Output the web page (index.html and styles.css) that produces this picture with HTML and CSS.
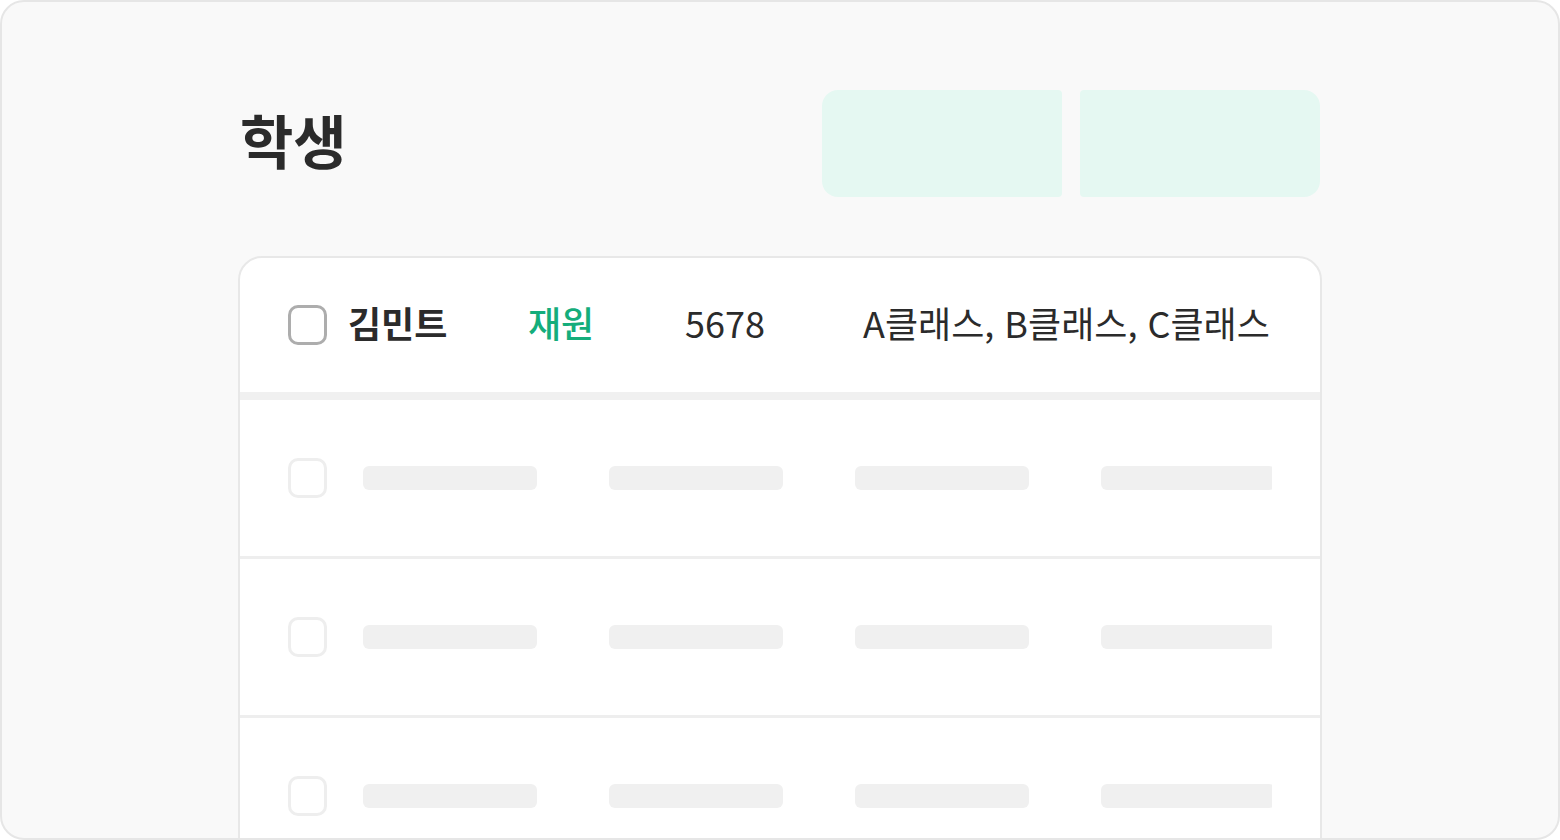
FILE: index.html
```html
<!DOCTYPE html>
<html lang="ko">
<head>
<meta charset="UTF-8" />
<meta name="viewport" content="width=device-width, initial-scale=1" />
<title>학생</title>
<link rel="stylesheet" href="styles.css">
</head>
<body>

<div class="frame">
  <div class="page">
    <div class="page-head">
      <h1>학생</h1>
      <div class="actions">
        <div class="action action-left"></div>
        <div class="action action-right"></div>
      </div>
    </div>

    <section class="list">
      <div class="row row-head">
        <div class="row-inner">
          <span class="check"></span>
          <span class="col col-name">김민트</span>
          <span class="col col-status">재원</span>
          <span class="col col-id">5678</span>
          <span class="col col-class">A클래스, B클래스, C클래스</span>
        </div>
      </div>

      <div class="row row-skel">
        <div class="row-inner">
          <span class="check check-light"></span>
          <span class="bar"></span><span class="bar"></span><span class="bar"></span><span class="bar"></span>
        </div>
      </div>
      <div class="row row-skel">
        <div class="row-inner">
          <span class="check check-light"></span>
          <span class="bar"></span><span class="bar"></span><span class="bar"></span><span class="bar"></span>
        </div>
      </div>
      <div class="row row-skel">
        <div class="row-inner">
          <span class="check check-light"></span>
          <span class="bar"></span><span class="bar"></span><span class="bar"></span><span class="bar"></span>
        </div>
      </div>
    </section>
  </div>
</div>

</body>
</html>
```

FILE: styles.css
```css
html, body {
  margin: 0; padding: 0;
  height: 100%;
  overflow: hidden;
}
body {
  font-family: "Noto Sans CJK KR", "Noto Sans", sans-serif;
  color: #2b2b2b;
  background: #fff;
}
.frame {
  box-sizing: border-box;
  width: 1560px;
  height: 840px;
  background: #f9f9f9;
  border: 2px solid #e6e6e6;
  border-radius: 24px;
  overflow: hidden;
}
.page {
  width: 1084px;
  margin-left: 236px;
  padding-top: 88px;
}
.page-head {
  display: flex;
  align-items: center;
  justify-content: space-between;
  height: 107px;
}
h1 {
  margin: 0 0 10px 2px;
  font-size: 58px;
  font-weight: 700;
  line-height: 1;
  color: #2b2b2b;
}
.actions {
  display: flex;
  gap: 18px;
  margin-right: 2px;
}
.action {
  width: 240px;
  height: 107px;
  background: #e5f8f2;
}
.action-left { border-radius: 16px 4px 4px 16px; }
.action-right { border-radius: 4px 16px 16px 4px; }

.list {
  margin-top: 59px;
  background: #fff;
  border: 2px solid #e8e8e8;
  border-radius: 24px;
  overflow: hidden;
  height: 700px;
}
.row-inner {
  display: flex;
  align-items: center;
  height: 100%;
  margin: 0 48px;
  overflow: hidden;
}
.row-head {
  height: 134px;
  border-bottom: 8px solid #f0f0f0;
  font-size: 36px;
}
.row-skel {
  height: 156px;
  border-bottom: 3px solid #eeeeee;
}
.row-skel .row-inner { gap: 72px; }
.check {
  flex: none;
  box-sizing: border-box;
  width: 39px;
  height: 40px;
  border: 3px solid #adadad;
  border-radius: 10px;
}
.check-light {
  border-color: #eeeeee;
  margin-right: -36px;
}
.col {
  white-space: nowrap;
  flex: none;
  margin-bottom: 6px;
}
.col-name {
  margin-left: 21px;
  width: 180px;
  font-weight: 700;
}
.col-status {
  width: 157px;
  color: #14ad7b;
  font-weight: 500;
}
.col-id { width: 178px; }
.bar {
  flex: none;
  width: 174px;
  height: 24px;
  border-radius: 6px;
  background: #f0f0f0;
}
```
